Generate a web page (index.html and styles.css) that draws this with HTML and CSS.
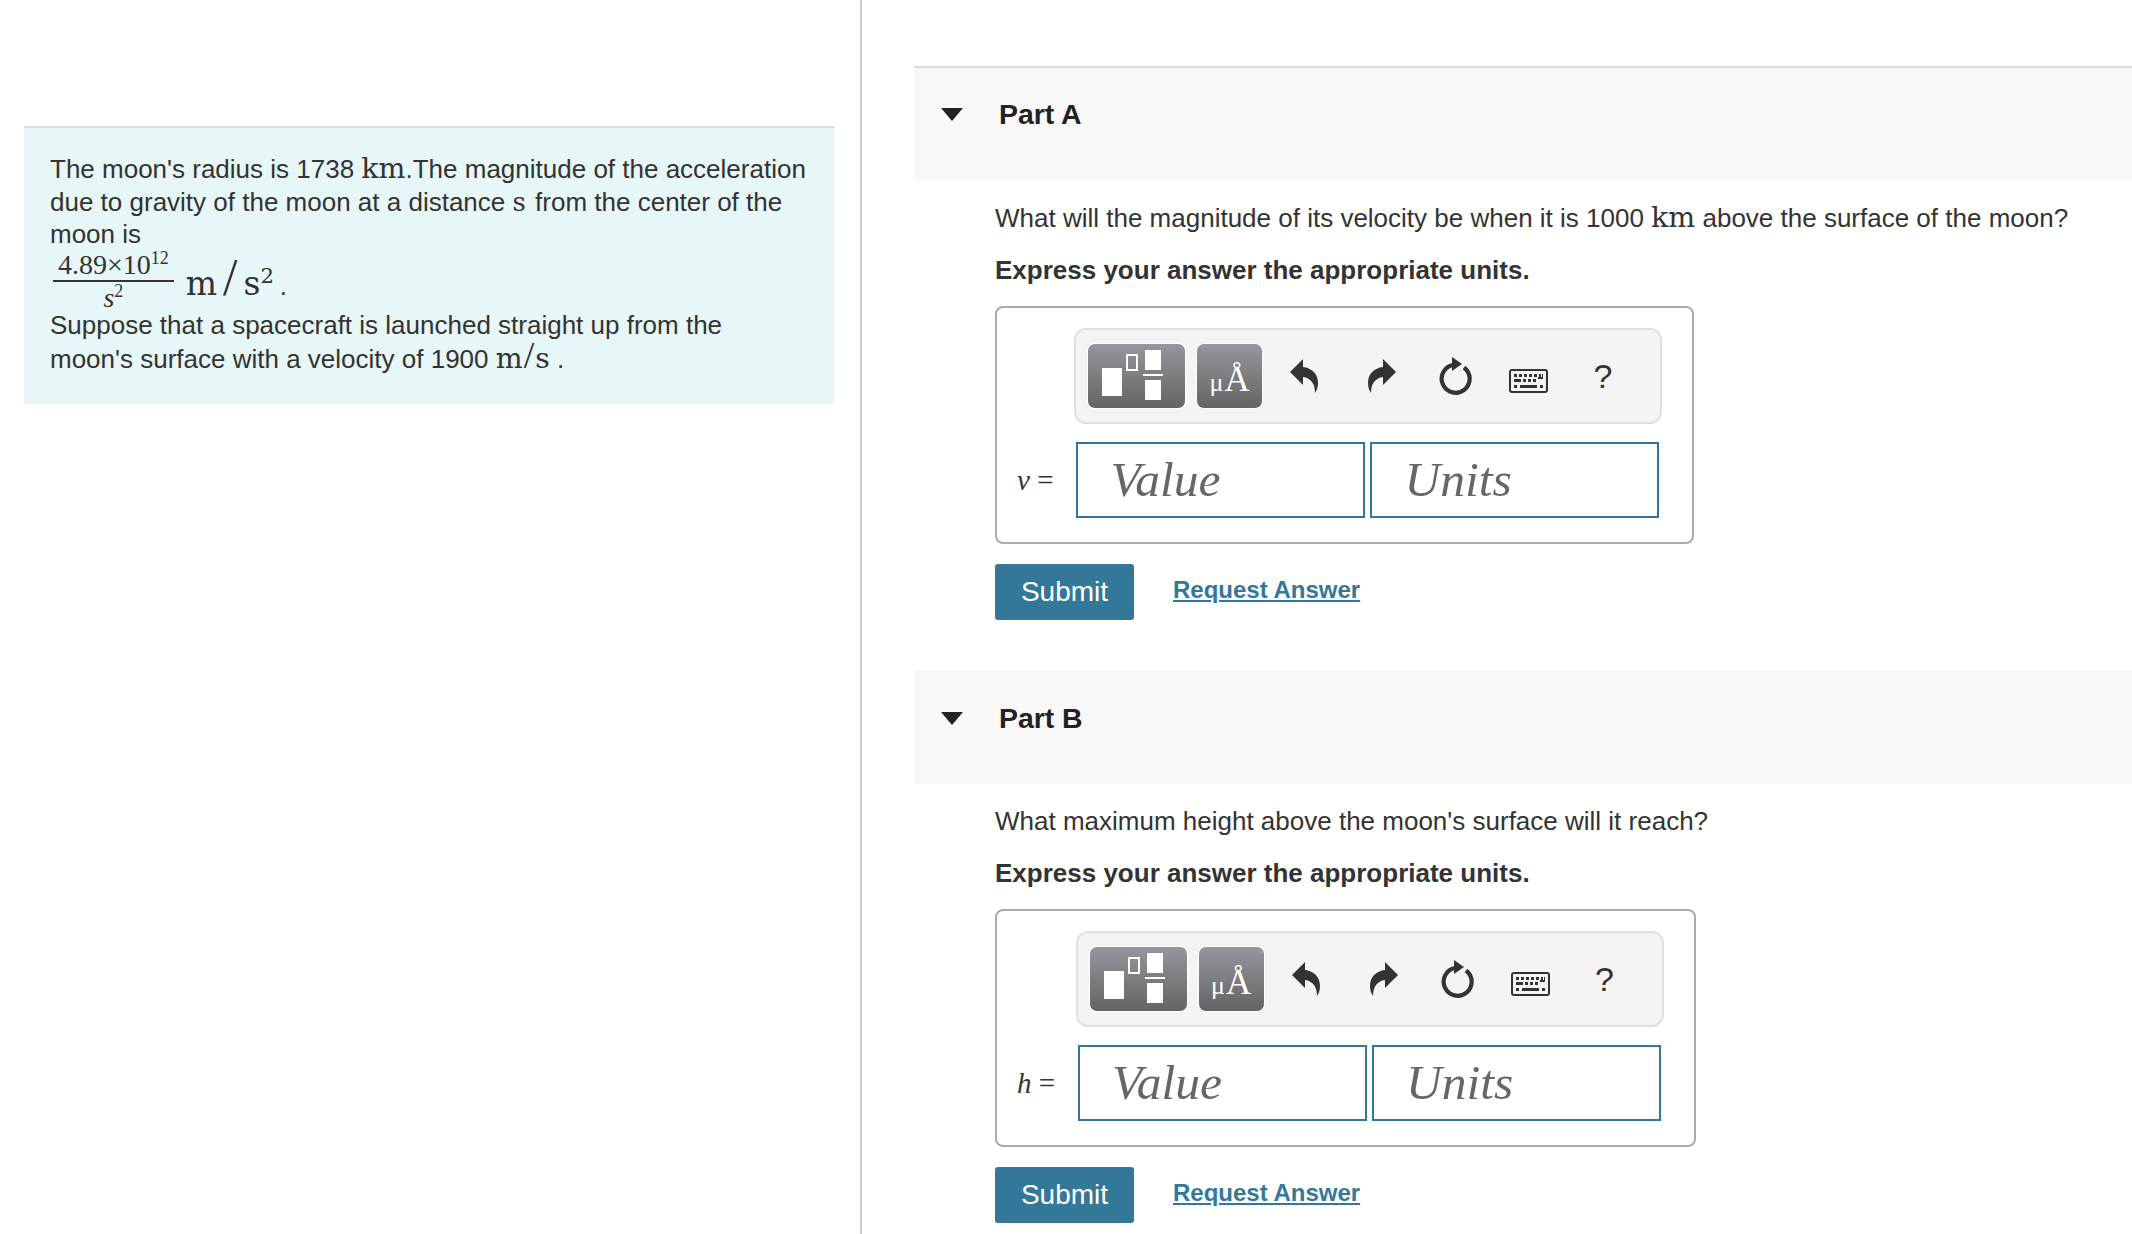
FILE: index.html

```html
<!DOCTYPE html>
<html lang="en">
<head>
  <meta charset="UTF-8">
  <title>Moon spacecraft problem</title>
  <link rel="stylesheet" href="styles.css">
</head>
<body>
  <svg class="defs" width="0" height="0">
    <symbol id="undo" viewBox="0 0 28 34">
      <path d="M0 13 L13 0 L13 8 C22 9 28 15 28 24 C28 28 27 31 25 34 C25 25 21 19 13 18 L13 26 Z"/>
    </symbol>
    <symbol id="redo" viewBox="0 0 28 34">
      <path d="M28 13 L15 0 L15 8 C6 9 0 15 0 24 C0 28 1 31 3 34 C3 25 7 19 15 18 L15 26 Z"/>
    </symbol>
    <symbol id="reset" viewBox="0 0 34 38">
      <path d="M26 10.5 A14 14 0 1 1 15 8" fill="none" stroke="#333" stroke-width="4.2"/>
      <path d="M14 0 L24 7 L14 14 Z"/>
    </symbol>
    <symbol id="keys" viewBox="0 0 39 24">
      <rect x="1" y="1" width="37" height="22" rx="2" fill="none" stroke="#333" stroke-width="2"/>
      <path d="M5 5h3v3h-3zM10 5h3v3h-3zM15 5h3v3h-3zM20 5h3v3h-3zM25 5h3v3h-3zM30 5h3v3h-3zM5 10h7v3h-7zM14 10h3v3h-3zM19 10h3v3h-3zM24 10h3v3h-3zM29 10h5v-5h-2v3h-3zM5 16h3v3h-3zM11 16h17v3h-17zM31 16h3v3h-3z"/>
    </symbol>
  </svg>

  <div class="left">
    <div class="intro">
      The moon's radius is 1738 <span class="math">km</span>.The magnitude of the acceleration due to gravity of the moon at a distance <span class="math small-s">s</span> from the center of the moon is<br>
      <span class="formula">
        <span class="frac"><span class="num">4.89×10<sup>12</sup></span><span class="den"><i>s</i><sup>2</sup></span></span>
        <span class="math big">m<span class="slash">/</span>s<sup>2</sup><span class="dot">.</span></span>
      </span>
      <span class="after">Suppose that a spacecraft is launched straight up from the moon's surface with a velocity of 1900 <span class="math">m<span class="slash small">/</span>s</span> .</span>
    </div>
  </div>

  <div class="right">
    <section class="part">
      <h2 class="part-head"><span class="caret"></span>Part A</h2>
      <div class="part-body">
        <p class="question">What will the magnitude of its velocity be when it is 1000 <span class="math">km</span> above the surface of the moon?</p>
        <p class="hint">Express your answer the appropriate units.</p>
        <div class="answer">
          <div class="toolbar">
            <button class="tool tool-wide"><span class="t-big"></span><span class="t-small"></span><span class="t-frac"><b></b><u></u><b></b></span></button>
            <button class="tool tool-unit"><span class="mu">μ</span><span class="ang">Å</span></button>
            <svg class="ico ico-undo"><use href="#undo"/></svg>
            <svg class="ico ico-redo"><use href="#redo"/></svg>
            <svg class="ico ico-reset"><use href="#reset"/></svg>
            <svg class="ico ico-keys"><use href="#keys"/></svg>
            <span class="help">?</span>
          </div>
          <label class="var"><i>v</i> =</label>
          <div class="fields">
            <input type="text" placeholder="Value">
            <input type="text" placeholder="Units">
          </div>
        </div>
        <div class="actions">
          <button class="submit">Submit</button>
          <a class="request" href="#">Request Answer</a>
        </div>
      </div>
    </section>

    <section class="part">
      <h2 class="part-head no-line"><span class="caret"></span>Part B</h2>
      <div class="part-body">
        <p class="question">What maximum height above the moon's surface will it reach?</p>
        <p class="hint">Express your answer the appropriate units.</p>
        <div class="answer">
          <div class="toolbar">
            <button class="tool tool-wide"><span class="t-big"></span><span class="t-small"></span><span class="t-frac"><b></b><u></u><b></b></span></button>
            <button class="tool tool-unit"><span class="mu">μ</span><span class="ang">Å</span></button>
            <svg class="ico ico-undo"><use href="#undo"/></svg>
            <svg class="ico ico-redo"><use href="#redo"/></svg>
            <svg class="ico ico-reset"><use href="#reset"/></svg>
            <svg class="ico ico-keys"><use href="#keys"/></svg>
            <span class="help">?</span>
          </div>
          <label class="var"><i>h</i> =</label>
          <div class="fields">
            <input type="text" placeholder="Value">
            <input type="text" placeholder="Units">
          </div>
        </div>
        <div class="actions">
          <button class="submit">Submit</button>
          <a class="request" href="#">Request Answer</a>
        </div>
      </div>
    </section>
  </div>
</body>
</html>
```

FILE: styles.css

```css
html, body {
  height: 100%;
}
body {
  margin: 0;
  display: flex;
  overflow: hidden;
  background: white;
  color: #333;
  font-family: "Liberation Sans", Arial, sans-serif;
  font-size: 26px;
}
.defs {
  position: absolute;
}
.left {
  width: 862px;
  flex: none;
  padding: 126px 26px 0 24px;
  box-sizing: border-box;
  border-right: 2px solid #c6c9d3;
}
.intro {
  background: #e7f6f6;
  border-top: 2px solid #ddd;
  padding: 25px 26px 26px;
  line-height: 32.5px;
  height: 278px;
  box-sizing: border-box;
}
.after {
  display: block;
  line-height: 34px;
}
.math {
  font-family: "DejaVu Serif", serif;
  font-size: 28.4px;
  line-height: 0;
  color: #333;
}
.small-s {
  font-size: 26px;
  margin-right: 2px;
}
.math sup, .frac sup {
  font-size: 64%;
  line-height: 0;
  vertical-align: 0.55em;
}
.slash {
  font-family: "Liberation Serif", serif;
  font-size: 52px;
  font-weight: 400;
  line-height: 0;
  margin: 0 6px;
}
.slash.small {
  font-size: 38px;
  margin: 0 1px;
}
.formula {
  display: inline-flex;
  align-items: center;
  gap: 12px;
  height: 61px;
  vertical-align: top;
  margin-bottom: -4px;
}
.frac {
  display: inline-flex;
  flex-direction: column;
  align-items: center;
  font-family: "Liberation Serif", serif;
  font-size: 28px;
  line-height: 30px;
  margin-left: 3px;
}
.num {
  border-bottom: 2px solid #333;
  padding: 0 5px;
}
.den {
  line-height: 28px;
  padding-top: 2px;
}
.big {
  font-size: 33px;
}
.dot {
  font-family: "Liberation Sans", Arial, sans-serif;
  font-size: 26px;
  margin-left: 6px;
}
.right {
  flex: 1;
  min-width: 0;
  padding: 66px 0 0 52px;
}
.part {
  margin-bottom: 50px;
}
.part-head {
  display: flex;
  align-items: flex-start;
  height: 115px;
  margin: 0;
  padding-top: 30px;
  box-sizing: border-box;
  background: #f8f8f8;
  border-top: 2px solid #ddd;
  font-size: 28.4px;
  line-height: 32px;
  font-weight: bold;
  color: #222;
}
.part-head.no-line {
  height: 114px;
  border-top: 0;
  padding-top: 32px;
}
.caret {
  width: 0;
  height: 0;
  margin: 10px 36px 0 27px;
  border-left: 11px solid transparent;
  border-right: 11px solid transparent;
  border-top: 13px solid #222;
}
.part-body {
  padding: 21px 0 0 81px;
}
.question {
  margin: 0;
  line-height: 32px;
  white-space: nowrap;
}
.hint {
  margin: 20px 0 20px;
  font-weight: bold;
  line-height: 32px;
}
.answer {
  display: inline-grid;
  grid-template-columns: auto auto;
  align-items: center;
  padding: 20px 33px 24px 20px;
  border: 2px solid #aaa;
  border-radius: 8px;
}
.toolbar {
  grid-column: 2;
  display: flex;
  align-items: center;
  height: 96px;
  box-sizing: border-box;
  margin: 0 -3px 18px -2px;
  padding-left: 11px;
  background: #f4f4f4;
  border: 2px solid #e0e0e0;
  border-radius: 12px;
}
.tool {
  position: relative;
  display: block;
  height: 66px;
  padding: 0;
  border: 1px solid #fff;
  border-radius: 8px;
  background: linear-gradient(#97959d, #646464);
  color: white;
}
.tool-wide {
  width: 99px;
}
.tool-unit {
  width: 67px;
  margin-left: 10px;
  font-family: "Liberation Serif", serif;
}
.t-big, .t-small, .t-frac {
  position: absolute;
}
.t-big {
  left: 14px;
  top: 24px;
  width: 20px;
  height: 28px;
  background: white;
}
.t-small {
  left: 38px;
  top: 10px;
  width: 8px;
  height: 13px;
  border: 2px solid white;
}
.t-frac {
  left: 55px;
  top: 6px;
  width: 20px;
  display: flex;
  flex-direction: column;
  align-items: center;
}
.t-frac b {
  display: block;
  width: 16px;
  height: 20px;
  background: white;
}
.t-frac u {
  display: block;
  width: 20px;
  height: 2px;
  margin: 4px 0;
  background: white;
}
.mu {
  position: absolute;
  left: 12px;
  top: 22px;
  font-size: 26px;
  line-height: 34px;
}
.ang {
  position: absolute;
  left: 27px;
  top: 14px;
  font-size: 35px;
  line-height: 44px;
}
.ico {
  display: block;
  fill: #333;
}
.ico-undo {
  width: 28px;
  height: 34px;
  margin-left: 27px;
}
.ico-redo {
  width: 28px;
  height: 34px;
  margin-left: 50px;
}
.ico-reset {
  width: 34px;
  height: 38px;
  margin-left: 42px;
}
.ico-keys {
  width: 39px;
  height: 24px;
  margin: 10px 0 0 37px;
}
.help {
  margin-left: 45px;
  font-size: 34px;
  color: #333;
}
.var {
  padding-right: 23px;
  font-family: "Liberation Serif", serif;
  font-size: 29px;
}
.fields {
  display: flex;
  gap: 5px;
}
.fields input {
  width: 289px;
  height: 76px;
  box-sizing: border-box;
  padding: 0 0 2px 32px;
  border: 2px solid #347899;
  border-radius: 0;
  outline: none;
  font-family: "Liberation Serif", serif;
  font-style: italic;
  font-size: 49.5px;
  background: white;
}
.fields input::placeholder {
  color: #666;
  opacity: 1;
}
.actions {
  display: flex;
  align-items: flex-start;
  margin-top: 20px;
}
.submit {
  width: 139px;
  height: 56px;
  padding: 0;
  border: none;
  border-radius: 3px;
  background: #347899;
  color: white;
  font-family: "Liberation Sans", Arial, sans-serif;
  font-size: 28px;
}
.request {
  margin: 11px 0 0 39px;
  color: #347899;
  font-size: 24px;
  font-weight: bold;
  line-height: 30px;
}
```
